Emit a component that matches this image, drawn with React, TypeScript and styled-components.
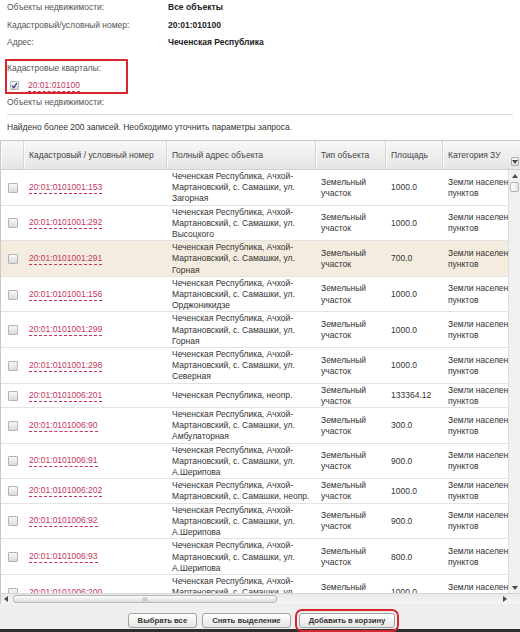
import styled, { createGlobalStyle } from "styled-components";

const GlobalStyle = createGlobalStyle`
  * { box-sizing: border-box; }
  html, body { margin: 0; padding: 0; background: #fff; }
  body {
    width: 520px;
    height: 632px;
    overflow: hidden;
    font-family: "Liberation Sans", Arial, sans-serif;
    font-size: 8.5px;
    color: #333;
  }
`;

const COLS = "23px 143px 149px 70px 57px 100px";

type Row = { id: string; addr: string; area: string; hl?: boolean };

const SAM = "Чеченская Республика, Ачхой-Мартановский, с. Самашки, ";

const rows: Row[] = [
  { id: "20:01:0101001:153", addr: SAM + "ул. Загорная", area: "1000.0" },
  { id: "20:01:0101001:292", addr: SAM + "ул. Высоцкого", area: "1000.0" },
  { id: "20:01:0101001:291", addr: SAM + "ул. Горная", area: "700.0", hl: true },
  { id: "20:01:0101001:156", addr: SAM + "ул. Орджоникидзе", area: "1000.0" },
  { id: "20:01:0101001:299", addr: SAM + "ул. Горная", area: "1000.0" },
  { id: "20:01:0101001:298", addr: SAM + "ул. Северная", area: "1000.0" },
  { id: "20:01:0101006:201", addr: "Чеченская Республика, неопр.", area: "133364.12" },
  { id: "20:01:0101006:90", addr: SAM + "ул. Амбулаторная", area: "300.0" },
  { id: "20:01:0101006:91", addr: SAM + "ул. А.Шерипова", area: "900.0" },
  { id: "20:01:0101006:202", addr: SAM + "неопр.", area: "1000.0" },
  { id: "20:01:0101006:92", addr: SAM + "ул. А.Шерипова", area: "900.0" },
  { id: "20:01:0101006:93", addr: SAM + "ул. А.Шерипова", area: "800.0" },
  { id: "20:01:0101006:200", addr: SAM + "ул. Загорная", area: "1000.0" },
];

const Page = styled.div`
  display: flex;
  flex-direction: column;
  height: 632px;
`;

const Top = styled.div`
  padding: 0 7px;
`;

const InfoList = styled.div`
  display: grid;
  grid-template-columns: 161px 1fr;
  row-gap: 3.5px;
  line-height: 14px;
`;

const InfoLabel = styled.div`
  color: #555;
`;

const InfoValue = styled.div`
  color: #222;
  font-weight: bold;
`;

const QuarterBox = styled.div`
  margin: 10px 0 0 -2px;
  width: 123px;
  height: 35px;
  border: 2px solid #d8262f;
  padding-top: 1px;
`;

const BoxLabel = styled.div`
  line-height: 13px;
  color: #555;
`;

const QuarterItem = styled.div`
  display: flex;
  align-items: center;
  gap: 9px;
  height: 17px;
  padding: 4px 0 0 3px;
`;

const Box = styled.span<{ $size: number }>`
  display: inline-flex;
  align-items: center;
  justify-content: center;
  flex: none;
  width: ${(p) => p.$size}px;
  height: ${(p) => p.$size}px;
  border: 1px solid #b4b4b4;
  border-radius: 1px;
  background: linear-gradient(#f7f7f7, #dcdcdc);
`;

const Link = styled.a`
  color: #c4345c;
  text-decoration: none;
  line-height: 11px;
  border-bottom: 1px dashed #c4345c;
  white-space: nowrap;
`;

const Label = styled.div`
  margin-top: 1px;
  line-height: 14px;
  color: #555;
`;

const Divider = styled.div`
  margin-top: 5px;
  height: 1px;
  background: #dcdcdc;
`;

const Notice = styled.div`
  margin-top: 5px;
  line-height: 14px;
  color: #333;
`;

const Grid = styled.div`
  margin-top: 6px;
  border-left: 1px solid #c8c8c8;
`;

const Header = styled.div`
  position: relative;
  height: 30px;
  display: grid;
  grid-template-columns: ${COLS};
  overflow: hidden;
  border-top: 1px solid #c6c6c6;
  border-bottom: 1px solid #d0d0d0;
  background: linear-gradient(#f8f8f8, #e5e5e5);
`;

const HeadCell = styled.div`
  display: flex;
  align-items: center;
  padding: 0 4px 0 5px;
  white-space: nowrap;
  color: #444;
  border-right: 1px solid #d6d6d6;
  box-shadow: inset 1px 0 #fbfbfb;
`;

const MenuButton = styled.span`
  position: absolute;
  right: 1px;
  top: 16px;
  width: 8px;
  height: 9px;
  display: flex;
  align-items: center;
  justify-content: center;
  border: 1px solid #a8a8a8;
  border-radius: 2px;
  background: linear-gradient(#ffffff, #e2e2e2);
`;

const Body = styled.div`
  display: flex;
  height: 423px;
`;

const Viewport = styled.div`
  flex: 1;
  overflow: hidden;
`;

const TableRow = styled.div<{ $hl?: boolean }>`
  display: grid;
  grid-template-columns: ${COLS};
  align-items: center;
  width: 542px;
  border-bottom: 1px solid #e2e2e2;
  background: ${(p) => (p.$hl ? "#f4ecdf" : "#fff")};
`;

const Cell = styled.div<{ $center?: boolean }>`
  display: flex;
  justify-content: ${(p) => (p.$center ? "center" : "flex-start")};
  padding: 1px 5px 0;
  line-height: 11.2px;
  color: #333;
`;

const VScroll = styled.div`
  width: 12px;
  display: flex;
  flex-direction: column;
  align-items: center;
  background: #f1f1f1;
  border-left: 1px solid #dedede;
`;

const Arrow = styled.span`
  display: flex;
  align-items: center;
  justify-content: center;
  width: 10px;
  height: 11px;
  flex: none;
`;

const VThumb = styled.span`
  width: 9px;
  height: 10px;
  margin-top: 1px;
  border: 1px solid #b4b4b4;
  border-radius: 2px;
  background: linear-gradient(90deg, #fdfdfd, #e4e4e4);
`;

const Spacer = styled.span`
  flex: 1;
`;

const HScroll = styled.div`
  height: 11px;
  display: flex;
  align-items: center;
  border-top: 1px solid #d6d6d6;
  background: linear-gradient(#e9e9e9, #f5f5f5);
`;

const HThumb = styled.span`
  width: 264px;
  height: 8px;
  margin-left: 2px;
  display: flex;
  align-items: center;
  justify-content: center;
  border: 1px solid #b4b4b4;
  border-radius: 3px;
  background: linear-gradient(#fdfdfd, #dedede);
  font-size: 5px;
  letter-spacing: 0.5px;
  color: #777;
`;

const Toolbar = styled.div`
  flex: 1;
  display: flex;
  justify-content: center;
  align-items: flex-start;
  gap: 5px;
  padding: 9px 0 0 3px;
  background: #efefef;
  border-bottom: 3px solid #2e2e2e;
`;

const Button = styled.button<{ $marked?: boolean }>`
  height: 15px;
  padding: 0 9px;
  margin-left: ${(p) => (p.$marked ? "3px" : "0")};
  border: 1px solid #a2a2a2;
  border-radius: 3px;
  background: linear-gradient(#ffffff, #e6e6e6);
  font-family: "Liberation Sans", Arial, sans-serif;
  font-size: 7.7px;
  font-weight: bold;
  color: #333;
  white-space: nowrap;
  outline: ${(p) => (p.$marked ? "2px solid #d8262f" : "none")};
  outline-offset: 2px;
`;

const Tri = ({ dir }: { dir: "up" | "down" | "left" | "right" }) => {
  const pts = {
    up: "0,4 3,0 6,4",
    down: "0,0 6,0 3,4",
    left: "4,0 4,6 0,3",
    right: "0,0 0,6 4,3",
  }[dir];
  const vertical = dir === "up" || dir === "down";
  return (
    <svg width={vertical ? 6 : 4} height={vertical ? 4 : 6} viewBox={vertical ? "0 0 6 4" : "0 0 4 6"}>
      <polygon points={pts} fill="#4a4a4a" />
    </svg>
  );
};

const Check = ({ size, checked }: { size: number; checked?: boolean }) => (
  <Box $size={size}>
    {checked && (
      <svg width="7" height="7" viewBox="0 0 7 7">
        <path d="M1 3.6 L2.8 5.6 L6 1" fill="none" stroke="#2a3f7a" strokeWidth="1.3" />
      </svg>
    )}
  </Box>
);

export default function App() {
  return (
    <>
      <GlobalStyle />
      <Page>
        <Top>
          <InfoList>
            <InfoLabel>Объекты недвижимости:</InfoLabel>
            <InfoValue>Все объекты</InfoValue>
            <InfoLabel>Кадастровый/условный номер:</InfoLabel>
            <InfoValue>20:01:010100</InfoValue>
            <InfoLabel>Адрес:</InfoLabel>
            <InfoValue>Чеченская Республика</InfoValue>
          </InfoList>
          <QuarterBox>
            <BoxLabel>Кадастровые кварталы:</BoxLabel>
            <QuarterItem>
              <Check size={9} checked />
              <Link>20:01:010100</Link>
            </QuarterItem>
          </QuarterBox>
          <Label>Объекты недвижимости:</Label>
          <Divider />
          <Notice>Найдено более 200 записей. Необходимо уточнить параметры запроса.</Notice>
        </Top>

        <Grid>
          <Header>
            <HeadCell />
            <HeadCell>Кадастровый / условный номер</HeadCell>
            <HeadCell>Полный адрес объекта</HeadCell>
            <HeadCell>Тип объекта</HeadCell>
            <HeadCell>Площадь</HeadCell>
            <HeadCell>Категория ЗУ</HeadCell>
            <MenuButton>
              <Tri dir="down" />
            </MenuButton>
          </Header>
          <Body>
            <Viewport>
              {rows.map((r) => (
                <TableRow key={r.id} $hl={r.hl}>
                  <Cell $center>
                    <Check size={10} />
                  </Cell>
                  <Cell>
                    <Link>{r.id}</Link>
                  </Cell>
                  <Cell>{r.addr}</Cell>
                  <Cell>Земельный участок</Cell>
                  <Cell>{r.area}</Cell>
                  <Cell>Земли населенных пунктов</Cell>
                </TableRow>
              ))}
            </Viewport>
            <VScroll>
              <Arrow>
                <Tri dir="up" />
              </Arrow>
              <VThumb />
              <Spacer />
              <Arrow>
                <Tri dir="down" />
              </Arrow>
            </VScroll>
          </Body>
          <HScroll>
            <Arrow>
              <Tri dir="left" />
            </Arrow>
            <HThumb>III</HThumb>
            <Spacer />
            <Arrow>
              <Tri dir="right" />
            </Arrow>
            <Arrow />
          </HScroll>
        </Grid>

        <Toolbar>
          <Button>Выбрать все</Button>
          <Button>Снять выделение</Button>
          <Button $marked>Добавить в корзину</Button>
        </Toolbar>
      </Page>
    </>
  );
}
